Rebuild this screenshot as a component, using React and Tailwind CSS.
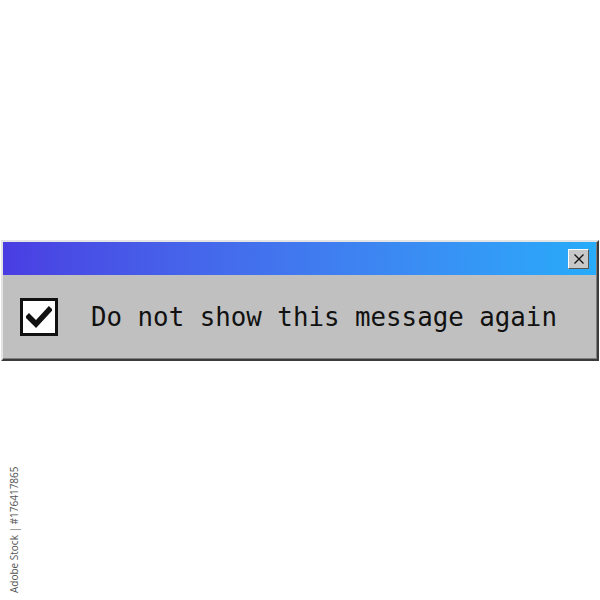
import React from "react";

export default function App() {
  return (
    <div className="relative w-[600px] h-[600px] bg-white overflow-hidden">
      <div className="pt-[240px] px-[1px]">
        {/* dialog frame with raised bevel */}
        <div className="w-[598px] border-t-2 border-l-2 border-t-[#e4e4e4] border-l-[#e4e4e4] border-b-2 border-r-2 border-b-[#3a3a3a] border-r-[#3a3a3a] bg-[#c0c0c0]">
          <div className="border-b border-r border-[#808080]">
            {/* title bar */}
            <div className="h-[33px] flex items-center justify-end pr-[7px] bg-gradient-to-r from-[#4a3de2] to-[#27abfa]">
              <div className="w-[21px] h-[20px] flex items-center justify-center bg-[#c8c8c8] border-t border-l border-t-white border-l-white border-b border-r border-b-[#555] border-r-[#555]">
                <svg width="12" height="12" viewBox="0 0 12 12">
                  <path d="M1.5 1.5 L10.5 10.5 M10.5 1.5 L1.5 10.5" stroke="#111" strokeWidth="1.3" />
                </svg>
              </div>
            </div>
            {/* body */}
            <div className="h-[83px] flex items-center pl-[17px] gap-[33px]">
              <div className="w-[38px] h-[38px] border-[3px] border-[#111] bg-white flex items-center justify-center">
                <svg width="26" height="22" viewBox="0 0 26 22">
                  <path d="M3 11 L10 18 L23 4" fill="none" stroke="#111" strokeWidth="5.5" strokeLinecap="square" />
                </svg>
              </div>
              <span
                className="text-[25.8px] leading-none text-[#111] mt-[2px]"
                style={{ fontFamily: '"DejaVu Sans Mono", "Liberation Mono", monospace' }}
              >
                Do not show this message again
              </span>
            </div>
          </div>
        </div>
      </div>
      <div
        className="absolute left-[7px] top-[593px] origin-top-left -rotate-90 text-[10px] text-[#555] whitespace-nowrap"
        style={{ fontFamily: '"Open Sans", "Liberation Sans", sans-serif' }}
      >
        Adobe Stock | #176417865
      </div>
    </div>
  );
}
